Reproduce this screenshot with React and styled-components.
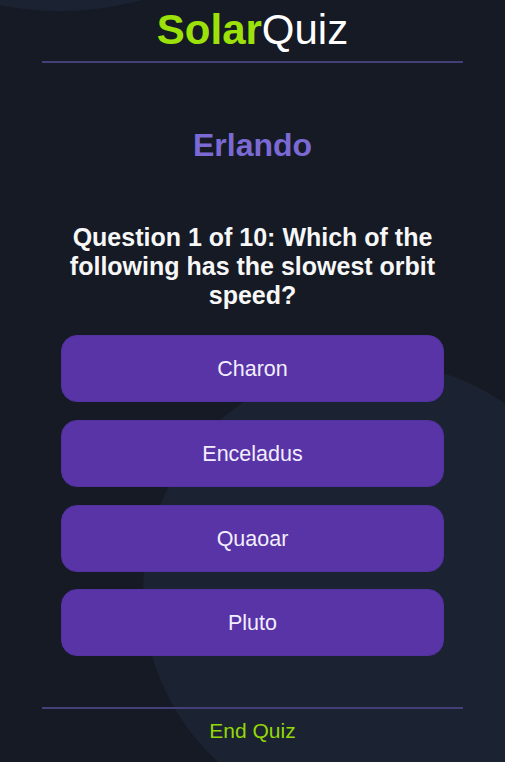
import React from "react";
import styled, { createGlobalStyle } from "styled-components";

const GlobalStyle = createGlobalStyle`
  html, body {
    margin: 0;
    padding: 0;
    background: #151a25;
  }
  body {
    font-family: "Liberation Sans", Arial, sans-serif;
  }
`;

const Page = styled.div`
  position: relative;
  min-height: 762px;
  overflow: hidden;
  background: #151a25;
  &::before {
    content: "";
    position: absolute;
    left: -251px;
    top: -611px;
    width: 622px;
    height: 622px;
    border-radius: 50%;
    background: #1b2232;
  }
  &::after {
    content: "";
    position: absolute;
    left: 143px;
    top: 362px;
    width: 460px;
    height: 460px;
    border-radius: 50%;
    background: #1b2232;
  }
`;

const Container = styled.main`
  position: relative;
  z-index: 1;
  width: 421px;
  margin: 0 auto;
  display: flex;
  flex-direction: column;
  align-items: center;
`;

const Title = styled.h1`
  margin: 6px 0 0;
  font-size: 42px;
  line-height: 48px;
  font-weight: 400;
  color: #ffffff;
  text-align: center;
`;

const Accent = styled.span`
  color: #9ce20a;
  font-weight: 700;
`;

const Divider = styled.hr`
  align-self: stretch;
  margin: ${(p) => p.$mt}px 0 0;
  border: 0;
  border-top: 2px solid #453f79;
  height: 0;
`;

const Player = styled.h2`
  margin: 63px 0 0;
  font-size: 32px;
  line-height: 38px;
  font-weight: 700;
  color: #7b6ad3;
  text-align: center;
`;

const Question = styled.p`
  margin: 59px 0 0;
  font-size: 25px;
  line-height: 28.75px;
  font-weight: 700;
  color: #f7f7f7;
  text-align: center;
`;

const Options = styled.div`
  margin-top: 26px;
  width: 383px;
  display: flex;
  flex-direction: column;
  gap: 17.7px;
`;

const OptionButton = styled.button`
  height: 67px;
  border: 1px solid #5231a0;
  border-radius: 16px;
  background: #5834a7;
  color: #f3eeff;
  font-family: "Liberation Sans", Arial, sans-serif;
  font-size: 21.5px;
  font-weight: 400;
  cursor: pointer;
  display: flex;
  align-items: center;
  justify-content: center;
  padding: 2px 0 0;
`;

const EndLink = styled.button`
  margin: 10px 0 0;
  background: none;
  border: 0;
  padding: 0;
  font-family: "Liberation Sans", Arial, sans-serif;
  font-size: 21px;
  line-height: 24px;
  color: #93d806;
  cursor: pointer;
`;

const options = ["Charon", "Enceladus", "Quaoar", "Pluto"];

export default function App() {
  return (
    <Page>
      <GlobalStyle />
      <Container>
        <Title>
          <Accent>Solar</Accent>Quiz
        </Title>
        <Divider $mt={7} />
        <Player>Erlando</Player>
        <Question>
          Question 1 of 10: Which of the following has the slowest orbit speed?
        </Question>
        <Options>
          {options.map((o) => (
            <OptionButton key={o}>{o}</OptionButton>
          ))}
        </Options>
        <Divider $mt={51} />
        <EndLink>End Quiz</EndLink>
      </Container>
    </Page>
  );
}
